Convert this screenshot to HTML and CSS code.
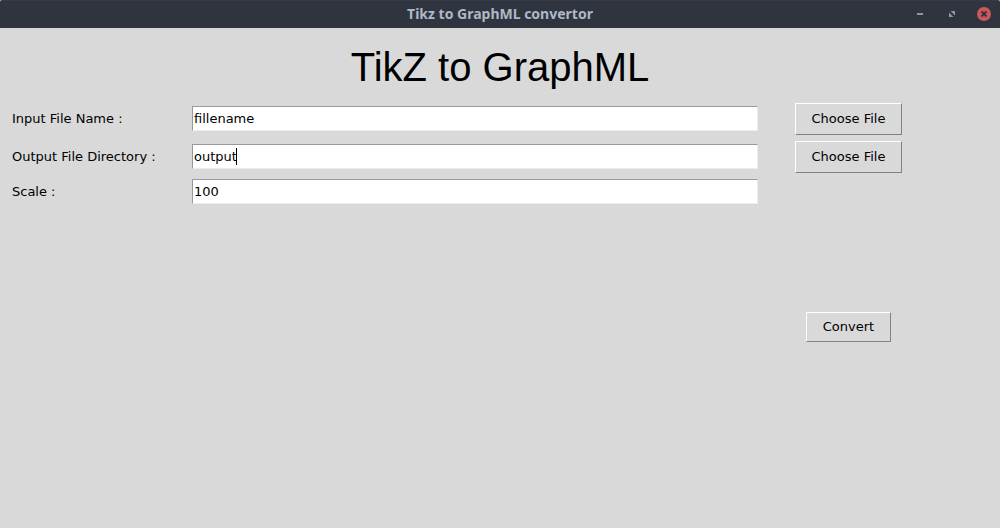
FILE: index.html
```html
<!DOCTYPE html>
<html lang="en">
<head>
<meta charset="utf-8">
<title>Tikz to GraphML convertor</title>
<link rel="stylesheet" href="styles.css">
</head>
<body>
<div class="window">
  <header class="titlebar">
    <div class="window-title">Tikz to GraphML convertor</div>
    <div class="window-controls">
      <button class="control" type="button" aria-label="Minimize">
        <svg viewBox="0 0 16 16" width="16" height="16"><path d="M5 7h6v2H5z" fill="#9095a1"/></svg>
      </button>
      <button class="control" type="button" aria-label="Maximize">
        <svg viewBox="0 0 16 16" width="16" height="16"><path d="M6.5 5H11v4.5zM5 6.5V11h4.5z" fill="#9095a1"/></svg>
      </button>
      <button class="control" type="button" aria-label="Close">
        <svg viewBox="0 0 16 16" width="16" height="16"><circle cx="8" cy="8" r="7" fill="#cc575d"/><path d="M5.5 5.5l5 5M10.5 5.5l-5 5" stroke="#2f343f" stroke-width="1.8"/></svg>
      </button>
    </div>
  </header>
  <main class="content">
    <h1 class="heading">TikZ to GraphML</h1>
    <form class="form">
      <div class="row">
        <label class="label" for="input-file">Input File Name :</label>
        <div class="entry"><input class="field" id="input-file" type="text" value="fillename"></div>
        <button class="button" type="button">Choose File</button>
      </div>
      <div class="row">
        <label class="label" for="output-dir">Output File Directory :</label>
        <div class="entry"><input class="field" id="output-dir" type="text" value="output"><span class="caret"></span></div>
        <button class="button" type="button">Choose File</button>
      </div>
      <div class="row">
        <label class="label" for="scale">Scale :</label>
        <div class="entry"><input class="field" id="scale" type="text" value="100"></div>
      </div>
      <div class="row row-submit">
        <button class="button button-convert" type="button">Convert</button>
      </div>
    </form>
  </main>
</div>
</body>
</html>
```
FILE: styles.css
```css
* { box-sizing: border-box; }

body {
  margin: 0;
  background: #d9d9d9;
  color: #000;
  font: 13px/19px "DejaVu Sans", sans-serif;
}

.window {
  min-height: 100vh;
}

.titlebar {
  display: grid;
  grid-template-columns: 1fr auto 1fr;
  align-items: center;
  height: 28px;
  padding: 0 8px 1px;
  border-top: 1px solid #353a49;
  border-radius: 2px 2px 0 0;
  background: #2f343f;
}

.window-title {
  grid-column: 2;
  color: #afb8c6;
  font: bold 14px/20px "Noto Sans", sans-serif;
}

.window-controls {
  display: flex;
  justify-content: flex-end;
  gap: 16px;
}

.control {
  width: 16px;
  height: 16px;
  padding: 0;
  border: 0;
  background: none;
}

.control svg { display: block; }

.heading {
  margin: 0;
  padding: 15px 0 12px;
  font: 40px/48px "Liberation Sans", sans-serif;
  text-align: center;
}

.form {
  display: grid;
  gap: 6px;
  padding: 0 61px 0 12px;
}

.row {
  display: grid;
  grid-template-columns: 180px minmax(0, 1fr) 181px;
  align-items: center;
}

.label,
.entry {
  padding-bottom: 1px;
}

.entry {
  position: relative;
}

.field {
  display: block;
  width: 100%;
  height: 25px;
  padding: 0 1px;
  border: 1px solid;
  border-color: #999 #ececec #ececec #999;
  border-radius: 0;
  outline: 0;
  background: #fff;
  color: #000;
  font: inherit;
}

.caret {
  position: absolute;
  top: 4px;
  left: 44px;
  width: 1px;
  height: 17px;
  background: #000;
}

.button {
  justify-self: center;
  width: 107px;
  height: 32px;
  padding: 0 0 2px;
  border: 1px solid;
  border-color: #fff #828282 #828282 #fff;
  border-radius: 0;
  background: #d9d9d9;
  color: #000;
  font: inherit;
}

.row-submit {
  padding-top: 101px;
}

.button-convert {
  grid-column: 3;
  width: 85px;
  height: 30px;
}
```
